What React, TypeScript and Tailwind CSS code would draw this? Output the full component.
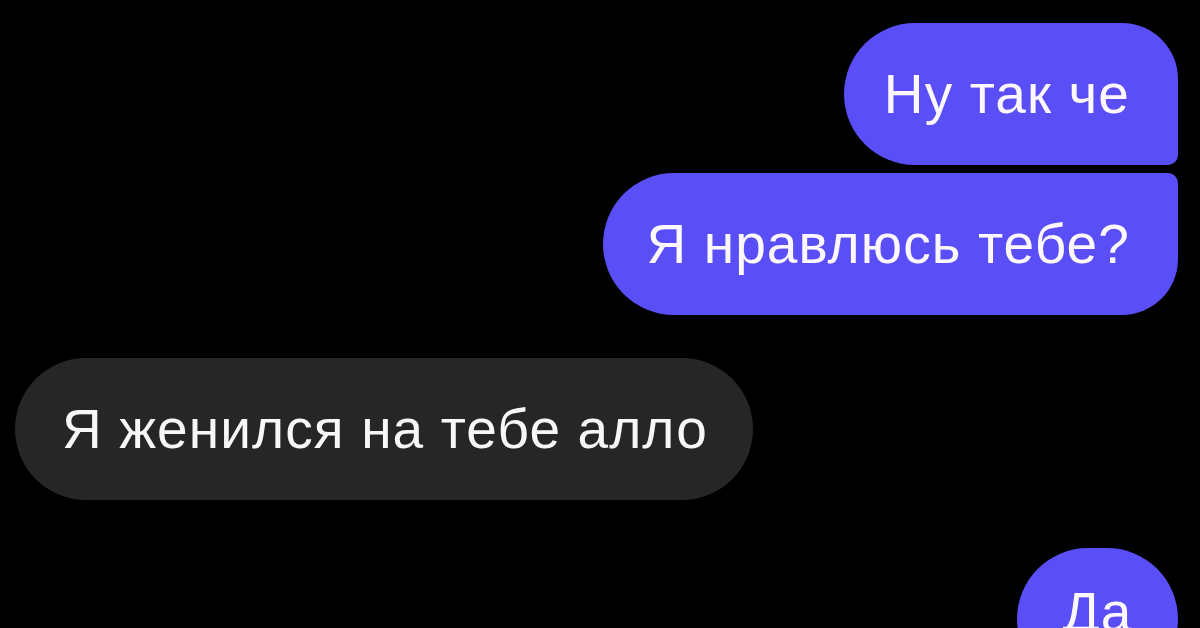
import React from 'react';

const font = { fontFamily: '"Liberation Sans", Arial, sans-serif' };

export default function App() {
  return (
    <div
      className="w-[1200px] h-[628px] overflow-hidden bg-black text-white flex flex-col pt-[23px]"
      style={font}
    >
      <div className="shrink-0 flex flex-col items-end pr-[22px] gap-[8px]">
        <div className="h-[142px] flex items-center pl-[40px] pr-[48px] bg-[#5a4ef6] rounded-l-[71px] rounded-tr-[56px] rounded-br-[10px]">
          <span className="text-[55px] leading-none tracking-[0.02em] text-[#fdf7ff]">Ну так че</span>
        </div>
        <div className="h-[142px] flex items-center pl-[44px] pr-[48px] bg-[#5a4ef6] rounded-l-[71px] rounded-tr-[10px] rounded-br-[56px]">
          <span className="text-[55px] leading-none tracking-[0.02em] text-[#fdf7ff]">Я нравлюсь тебе?</span>
        </div>
      </div>

      <div className="shrink-0 mt-[43px] ml-[15px] self-start h-[142px] flex items-center pl-[47px] pr-[45px] bg-[#262626] rounded-[71px]">
        <span className="text-[55px] leading-none tracking-[0.02em] text-[#f7f7f7]">Я женился на тебе алло</span>
      </div>

      <div className="shrink-0 mt-[48px] flex justify-end pr-[22px]">
        <div className="h-[142px] w-[161px] flex items-center justify-center pb-[14px] bg-[#5a4ef6] rounded-[71px]">
          <span className="text-[55px] leading-none tracking-[0.02em] text-[#fdf7ff]">Да</span>
        </div>
      </div>
    </div>
  );
}
